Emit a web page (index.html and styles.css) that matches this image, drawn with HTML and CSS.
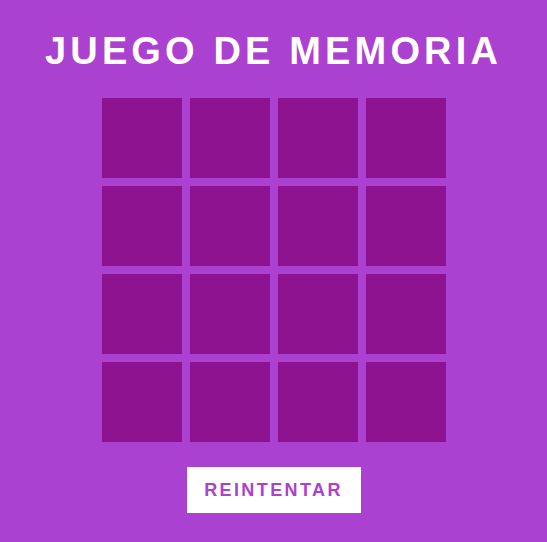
FILE: index.html
```html
<!DOCTYPE html>
<html lang="es">
<head>
<meta charset="utf-8">
<title>Juego de memoria</title>
<link rel="stylesheet" href="styles.css">
</head>
<body>
<main class="game">
  <h1 class="title">JUEGO DE MEMORIA</h1>
  <div class="board">
    <div class="card"></div><div class="card"></div><div class="card"></div><div class="card"></div>
    <div class="card"></div><div class="card"></div><div class="card"></div><div class="card"></div>
    <div class="card"></div><div class="card"></div><div class="card"></div><div class="card"></div>
    <div class="card"></div><div class="card"></div><div class="card"></div><div class="card"></div>
  </div>
  <button class="retry">REINTENTAR</button>
</main>
</body>
</html>
```
FILE: styles.css
```css
html, body {
  margin: 0;
  padding: 0;
  background: #ab41d0;
  height: 100%;
}
body {
  font-family: "Liberation Sans", Arial, sans-serif;
}
.game {
  display: flex;
  flex-direction: column;
  align-items: center;
  padding-top: 29px;
}
.title {
  margin: 0 0 25px 0;
  font-size: 38px;
  line-height: 44px;
  font-weight: bold;
  color: #ffffff;
  letter-spacing: 4.15px;
}
.board {
  display: grid;
  grid-template-columns: repeat(4, 80px);
  grid-auto-rows: 80px;
  gap: 8px;
}
.card {
  background: #8e1390;
}
.retry {
  margin-top: 25px;
  width: 174px;
  height: 46px;
  border: none;
  background: #ffffff;
  color: #ab41d0;
  font-family: "Liberation Sans", Arial, sans-serif;
  font-size: 18px;
  font-weight: bold;
  letter-spacing: 2.4px;
  padding: 0;
}
```
